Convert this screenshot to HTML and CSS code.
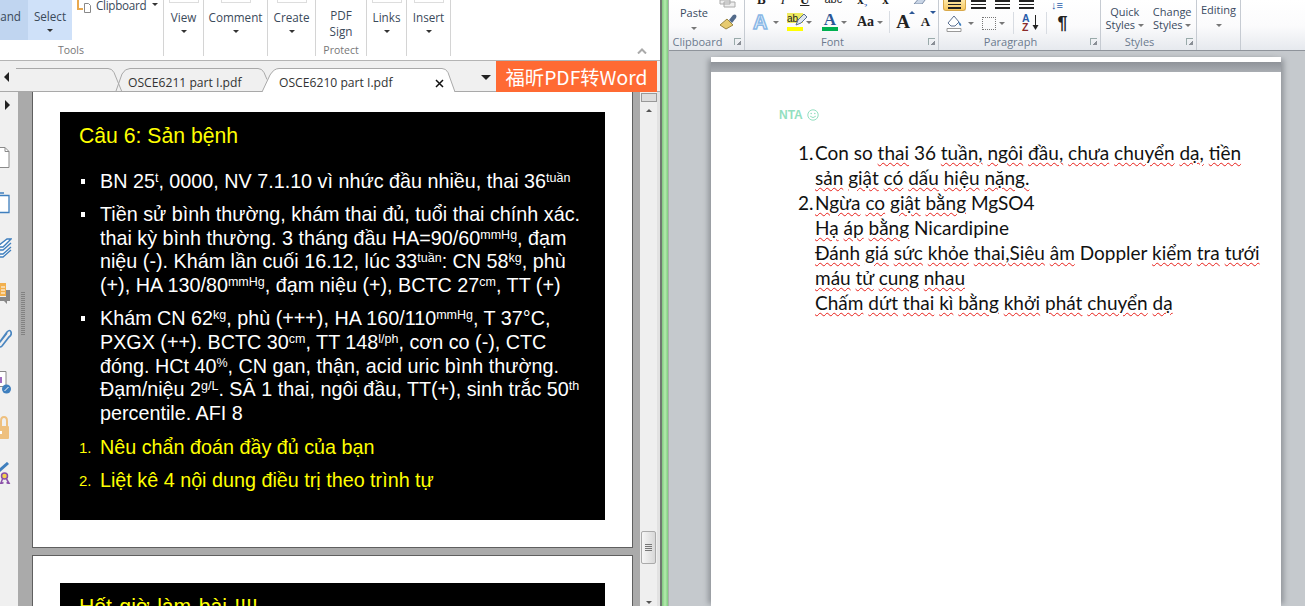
FILE: index.html
```html
<!DOCTYPE html>
<html lang="vi">
<head>
  <meta charset="UTF-8" />
  <title>OSCE6210 part I.pdf</title>
  <link rel="stylesheet" href="styles.css">
</head>
<body>
  <div class="screen">
    <!-- pdf reader window -->
    <section class="reader">
      <div class="pdf-ribbon">
        <div class="pdf-group tools">
          <div class="tools-top">
            <div class="tool tool-hand">and</div>
            <div class="tool tool-select">
              <span>Select</span>
              <i class="caret"></i>
            </div>
            <div class="clipboard">
              <svg width="15" height="13" viewBox="0 0 15 13"><path d="M1 0v9h5" fill="none" stroke="#e9a94f" stroke-width="2"/><path d="M7.500 3.500h4l2 2v7h-6z" fill="#fff" stroke="#888"/></svg>
              <span>Clipboard</span>
              <i class="caret"></i>
            </div>
          </div>
          <div class="pdf-label tools-label">Tools</div>
        </div>
        <div class="pdf-group menu menu-view"><b class="stub"></b><span>View</span><i class="caret"></i></div>
        <div class="pdf-group menu menu-comment"><b class="stub"></b><span>Comment</span><i class="caret"></i></div>
        <div class="pdf-group menu menu-create"><b class="stub"></b><span>Create</span><i class="caret"></i></div>
        <div class="pdf-group menu menu-protect">
          <span class="sign">PDF<br>Sign</span>
          <div class="pdf-label">Protect</div>
        </div>
        <div class="pdf-group menu menu-links"><b class="stub"></b><span>Links</span><i class="caret"></i></div>
        <div class="pdf-group menu menu-insert"><b class="stub"></b><span>Insert</span><i class="caret"></i></div>
        <div class="collapse">
          <svg width="10" height="6" viewBox="0 0 10 6"><path d="M1 5.500l4-4 4 4" fill="none" stroke="#aaa" stroke-width="2"/></svg>
        </div>
      </div>

      <div class="tab-strip">
        <svg class="tab-lines" width="496" height="31" viewBox="0 0 496 31">
          <path d="M262 31l8-17q4-6.500 9-6.500h163q4 0 6 4l7 19.500z" fill="#fff"/>
          <path d="M16 7.500h92q4 0 6 4l8 19.500M116 30l6-17q3-5.500 8-5.500h128q4 0 6 4l3 7M262 31l8-17q4-6.500 9-6.500h163q4 0 6 4l7 19.500" fill="none" stroke="#a9a9a9"/>
        </svg>
        <i class="arrow-left"></i>
        <div class="tab tab-one">OSCE6211 part I.pdf</div>
        <div class="tab tab-two">OSCE6210 part I.pdf</div>
        <svg class="tab-close" width="9" height="9" viewBox="0 0 9 9"><path d="M1 1l7 7M8 1l-7 7" stroke="#111" stroke-width="1.500"/></svg>
        <i class="tab-more"></i>
        <div class="convert">福昕PDF转Word</div>
      </div>

      <div class="reader-body">
        <div class="rail">
          <i class="arrow-right"></i>
          <div class="rail-icons">
            <div class="rail-icon"><svg width="12" height="22" viewBox="0 0 12 22"><path d="M-3 .5h8l4 4v16h-12z" fill="#fff" stroke="#8a8a8a"/><path d="M5 .5v4h4" fill="none" stroke="#8a8a8a"/></svg></div>
            <div class="rail-icon"><svg width="12" height="22" viewBox="0 0 12 22"><path d="M-3 1h7M-3 3.500h12v17h-12" fill="#fff" stroke="#3f7fbe" stroke-width="1.300"/></svg></div>
            <div class="rail-icon"><svg width="12" height="20" viewBox="0 0 12 20"><path d="M-2 8l9-7h4l-8 8h-5zM-2 12h5l8-7M-2 16h5l8-7M-2 19h5l8-7" fill="#fff" stroke="#3f7fbe" stroke-width="1.300"/></svg></div>
            <div class="rail-icon"><svg width="12" height="22" viewBox="0 0 12 22"><path d="M0 1h6v13h-6z" fill="#f2b04e"/><path d="M1 5h4M1 8h4M1 11h4" stroke="#fff"/><path d="M6 8h4v11h-3v3l-3-3h-4v-4h6z" fill="#888"/></svg></div>
            <div class="rail-icon"><svg width="12" height="22" viewBox="0 0 12 22"><path d="M-1 16l8-11q3-3 4 0t-2 5l-7 9q-2 2-3 0t1-4l7-9" fill="none" stroke="#4a86c0" stroke-width="1.700"/></svg></div>
            <div class="rail-icon"><svg width="12" height="24" viewBox="0 0 12 24"><path d="M-2 .5h8v15h-8z" fill="#fff" stroke="#888"/><path d="M1 6v6" stroke="#a06bc0" stroke-width="2"/><circle cx="6.500" cy="18" r="4.500" fill="#3f7fbe"/><path d="M4.500 20l4-4" stroke="#fff"/></svg></div>
            <div class="rail-icon"><svg width="12" height="24" viewBox="0 0 12 24"><path d="M1 10v-5q0-4 3-4t3 4v5" fill="none" stroke="#eec07f" stroke-width="2"/><rect x="-2" y="10" width="11" height="13" rx="1" fill="#eec07f"/><rect x="0" y="15" width="2" height="3" fill="#fff"/></svg></div>
            <div class="rail-icon"><svg width="12" height="22" viewBox="0 0 12 22"><path d="M-1 9l9-8" stroke="#3f7fbe" stroke-width="3"/><circle cx="4.500" cy="14" r="3" fill="#f2d34e" stroke="#8a4fa8" stroke-width="1.500"/><path d="M2.500 17l-2 5 3-1.500M6.500 17l3 5-3-1.500" fill="none" stroke="#8a4fa8" stroke-width="1.500"/></svg></div>
          </div>
        </div>
        <div class="pane-split"><i class="grip"></i></div>

        <div class="pages">
          <div class="page page-first">
            <div class="slide">
              <h2 class="slide-title">Câu 6: Sản bệnh</h2>
              <ul class="bullets">
                <li>BN 25<sup>t</sup>, 0000, NV 7.1.10 vì nhức đầu nhiều, thai 36<sup>tuần</sup></li>
                <li>Tiền sử bình thường, khám thai đủ, tuổi thai chính xác.<br>thai kỳ bình thường. 3 tháng đầu HA=90/60<sup>mmHg</sup>, đạm<br>niệu (-). Khám lần cuối 16.12, lúc 33<sup>tuần</sup>: CN 58<sup>kg</sup>, phù<br>(+), HA 130/80<sup>mmHg</sup>, đạm niệu (+), BCTC 27<sup>cm</sup>, TT (+)</li>
                <li>Khám CN 62<sup>kg</sup>, phù (+++), HA 160/110<sup>mmHg</sup>, T 37°C,<br>PXGX (++). BCTC 30<sup>cm</sup>, TT 148<sup>l/ph</sup>, cơn co (-), CTC<br>đóng. HCt 40<sup>%</sup>, CN gan, thận, acid uric bình thường.<br>Đạm/niệu 2<sup>g/L</sup>. SÂ 1 thai, ngôi đầu, TT(+), sinh trắc 50<sup>th</sup><br>percentile. AFI 8</li>
              </ul>
              <ol class="questions">
                <li>Nêu chẩn đoán đầy đủ của bạn</li>
                <li>Liệt kê 4 nội dung điều trị theo trình tự</li>
              </ol>
            </div>
          </div>
          <div class="page page-second">
            <div class="slide slide-next">
              <h2 class="slide-title">Hết giờ làm bài !!!!</h2>
            </div>
          </div>
        </div>

        <div class="scrollbar">
          <div class="split-box"></div>
          <i class="scroll-up"></i>
          <div class="thumb"><i></i><i></i><i></i><i></i></div>
          <i class="scroll-down"></i>
        </div>
      </div>
    </section>

    <div class="window-edge"></div>

    <!-- word window -->
    <section class="word">
      <div class="word-ribbon">
        <div class="w-group g-clipboard">
          <div class="w-tools">
            <div class="paste">Paste<i class="caret caret-soft"></i></div>
            <div class="clip-side">
              <svg width="18" height="8" viewBox="0 0 18 8"><path d="M1 0h10v4h-10zM5 2h11v5h-11z" fill="#eee" stroke="#aaa"/></svg>
              <svg width="18" height="16" viewBox="0 0 18 16"><path d="M10 6l4-5q2-1 3 0t0 3l-4 5z" fill="#526a8a"/><path d="M1 11l7-6 6 6-7 4z" fill="#e7cb70" stroke="#9a8540"/></svg>
            </div>
          </div>
          <div class="w-label">Clipboard<i class="launcher"></i></div>
        </div>

        <div class="w-group g-font">
          <div class="w-tools font-tools">
            <div class="top-row">
              <b class="bold">B</b><em class="ital">I</em><u class="under">U</u>
              <s class="strike">abc</s><span class="subs">x<sub>2</sub></span><span class="sups">x</span>
              <svg class="eraser" width="18" height="9" viewBox="0 0 18 9"><path d="M2 9l8-9h7l-7 9z" fill="#c9d5e6" stroke="#7d8ea8"/></svg>
            </div>
            <div class="bottom-row">
              <span class="fx-a">A</span><i class="caret caret-soft"></i>
              <span class="hl-a">ab<svg width="13" height="13" viewBox="0 0 13 13"><path d="M1 12l2-5 6-6 3 3-6 6z" fill="#dfe6ef" stroke="#5b7091"/></svg></span><i class="caret caret-soft"></i>
              <span class="col-a">A</span><i class="caret caret-soft"></i>
              <span class="case-a">Aa</span><i class="caret caret-soft"></i>
              <i class="sep sep-font"></i>
              <span class="grow-a">A</span><span class="shrink-a">A</span>
            </div>
          </div>
          <div class="w-label">Font<i class="launcher"></i></div>
        </div>

        <div class="w-group g-para">
          <div class="w-tools para-tools">
            <div class="top-row">
              <span class="al al-on"><i></i><i></i><i></i></span>
              <span class="al"><i></i><i></i><i></i></span>
              <span class="al"><i></i><i></i><i></i></span>
              <span class="al"><i></i><i></i><i></i></span>
              <span class="spacing">↓≡</span>
            </div>
            <div class="bottom-row">
              <svg class="shade" width="20" height="18" viewBox="0 0 20 18"><path d="M3 9l6-7 5 6-4 4H6z" fill="#fff" stroke="#5b7091"/><path d="M14 8q3 2 2 4-3-1-2-4z" fill="#3f7fbe"/><path d="M2 14.500h14v3h-14z" fill="#fff" stroke="#999"/></svg>
              <i class="caret caret-soft"></i>
              <span class="borders"></span>
              <i class="caret caret-soft"></i>
              <i class="sep sep-border"></i>
              <span class="az"><span>A</span><span>Z</span></span>
              <svg class="az-arrow" width="7" height="16" viewBox="0 0 7 16"><path d="M3.500 0v11" stroke="#222"/><path d="M.5 10h6l-3 5z" fill="#222"/></svg>
              <i class="sep sep-sort"></i>
              <span class="pilcrow">¶</span>
            </div>
          </div>
          <div class="w-label">Paragraph<i class="launcher"></i></div>
        </div>

        <div class="w-group g-styles">
          <div class="w-tools style-tools">
            <div class="style-btn">Quick<br>Styles <i class="caret caret-soft"></i></div>
            <div class="style-btn">Change<br>Styles <i class="caret caret-soft"></i></div>
          </div>
          <div class="w-label">Styles<i class="launcher"></i></div>
        </div>

        <div class="w-group g-editing">
          <span>Editing</span>
          <i class="caret caret-soft"></i>
        </div>
        <div class="w-rest"></div>
      </div>

      <div class="doc-area">
        <div class="doc-sheet">
          <div class="doc-prev"></div>
          <div class="doc-gap"></div>
          <div class="doc-page">
            <div class="header-note">NTA <svg class="smile" width="12" height="12" viewBox="0 0 12 12"><circle cx="6" cy="6" r="5.200" fill="none" stroke="#93dfc0"/><circle cx="4.200" cy="4.500" r=".8" fill="#93dfc0"/><circle cx="7.800" cy="4.500" r=".8" fill="#93dfc0"/><path d="M3.200 7.200q2.800 2.800 5.600 0" fill="none" stroke="#93dfc0"/></svg></div>
            <ol class="answers">
              <li>Con so <span class="sp">thai</span> 36 <span class="sp">tuần,</span> <span class="sp">ngôi</span> <span class="sp">đầu,</span> <span class="sp">chưa</span> <span class="sp">chuyển</span> <span class="sp">dạ,</span> <span class="sp">tiền</span><br><span class="sp">sản</span> <span class="sp">giật</span> <span class="sp">có</span> <span class="sp">dấu</span> <span class="sp">hiệu</span> <span class="sp">nặng.</span></li>
              <li><span class="sp">Ngừa</span> <span class="sp">co</span> <span class="sp">giật</span> <span class="sp">bằng</span> MgSO4<br><span class="sp">Hạ</span> <span class="sp">áp</span> <span class="sp">bằng</span> Nicardipine<br><span class="sp">Đánh</span> <span class="sp">giá</span> <span class="sp">sức</span> <span class="sp">khỏe</span> <span class="sp">thai,Siêu</span> <span class="sp">âm</span> Doppler <span class="sp">kiểm</span> <span class="sp">tra</span> <span class="sp">tưới</span><br><span class="sp">máu</span> <span class="sp">tử</span> <span class="sp">cung</span> <span class="sp">nhau</span><br><span class="sp">Chấm</span> <span class="sp">dứt</span> <span class="sp">thai</span> <span class="sp">kì</span> <span class="sp">bằng</span> <span class="sp">khởi</span> <span class="sp">phát</span> <span class="sp">chuyển</span> <span class="sp">dạ</span></li>
            </ol>
          </div>
        </div>
      </div>
    </section>
  </div>
</body>
</html>
```
FILE: styles.css
```css
* {
  box-sizing: border-box;
}

html, body {
  margin: 0;
  padding: 0;
  overflow: hidden;
}

body {
  font-family: "Open Sans", "Liberation Sans", sans-serif;
  background: #fff;
}

.screen {
  display: flex;
  width: 1305px;
  height: 606px;
  overflow: hidden;
}

.caret {
  display: inline-block;
  width: 0;
  height: 0;
  border-left: 3px solid transparent;
  border-right: 3px solid transparent;
  border-top: 3px solid #333;
}

.caret-soft {
  border-top-color: #777;
}

/* pdf reader */
.reader {
  width: 660px;
  height: 606px;
  display: flex;
  flex-direction: column;
  background: #fff;
}

.pdf-ribbon {
  height: 61px;
  display: flex;
  border-bottom: 1px solid #b4b4b4;
  font-size: 11.700px;
  color: #3b4a5a;
  overflow: hidden;
}

.pdf-group {
  height: 56px;
  border-right: 1px solid #d4d4d4;
  position: relative;
}

.pdf-label {
  text-align: center;
  font-size: 10.500px;
  color: #777;
  line-height: 14px;
  position: absolute;
  left: 0;
  right: 0;
  bottom: -1px;
}

.tools-label {
  right: 21px;
}

.tools {
  width: 164px;
}

.tools-top {
  display: flex;
  height: 40px;
}

.tool {
  display: flex;
  flex-direction: column;
  align-items: center;
  padding-top: 7px;
  line-height: 18px;
}

.tool-hand {
  width: 28px;
  background: #c0d5f0;
  align-items: flex-end;
  padding-right: 7px;
}

.tool-select {
  width: 44px;
  background: #cfe1f9;
  gap: 4px;
}

.clipboard {
  display: flex;
  align-items: flex-start;
  gap: 4px;
  margin-left: 5px;
  line-height: 10px;
}

.clipboard span {
  letter-spacing: -0.300px;
}

.clipboard .caret {
  margin-top: 3px;
  margin-left: 2px;
}

.menu {
  display: flex;
  flex-direction: column;
  align-items: center;
  padding-top: 8px;
  line-height: 18px;
}

.menu .caret {
  margin-top: 4px;
}

.stub {
  position: absolute;
  top: -11px;
  width: 30px;
  height: 14px;
  border: 1px solid #ddd;
}

.menu-view { width: 40px; }
.menu-comment { width: 64px; }
.menu-create { width: 48px; }
.menu-protect { width: 51px; padding-top: 8px; }
.menu-links { width: 40px; }
.menu-insert { width: 44px; }

.sign {
  line-height: 15.500px;
  text-align: center;
}

.collapse {
  flex: 1;
  display: flex;
  justify-content: flex-end;
  align-items: flex-end;
  padding: 0 13px 6px 0;
}

/* tabs */
.tab-strip {
  height: 31px;
  background: #f0f0f0;
  border-bottom: 1px solid #a9a9a9;
  display: flex;
  position: relative;
  font-size: 12.150px;
  color: #333;
}

.tab-lines {
  position: absolute;
  left: 0;
  top: 0;
}

.arrow-left {
  position: absolute;
  left: 4px;
  top: 11px;
  border-top: 5px solid transparent;
  border-bottom: 5px solid transparent;
  border-right: 5px solid #222;
}

.tab {
  position: relative;
  line-height: 14px;
  padding-top: 15px;
  white-space: nowrap;
}

.tab-one {
  margin-left: 128px;
  width: 151px;
}

.tab-two {
  width: 156px;
}

.tab-close {
  position: relative;
  margin-top: 18px;
}

.tab-more {
  position: relative;
  margin: 14px 0 0 37px;
  width: 0;
  height: 0;
  border-left: 5px solid transparent;
  border-right: 5px solid transparent;
  border-top: 5px solid #222;
}

.convert {
  position: absolute;
  left: 496px;
  top: 0;
  width: 161px;
  height: 31px;
  background: #ff6a33;
  color: #fff;
  font-family: "Noto Sans CJK SC", "Noto Sans", sans-serif;
  font-size: 19.300px;
  line-height: 32px;
  text-align: center;
  white-space: nowrap;
}

/* reader body */
.reader-body {
  flex: 1;
  display: flex;
  min-height: 0;
}

.rail {
  width: 18px;
  background: #f0f0f0;
  overflow: hidden;
  position: relative;
}

.arrow-right {
  position: absolute;
  left: 5px;
  top: 8px;
  border-top: 5px solid transparent;
  border-bottom: 5px solid transparent;
  border-left: 5px solid #222;
}

.rail-icons {
  margin-top: 43px;
  display: flex;
  flex-direction: column;
}

.rail-icon {
  height: 45px;
  display: flex;
  align-items: center;
}

.pane-split {
  width: 14px;
  background: #aaa;
  position: relative;
}

.grip {
  position: absolute;
  left: 3px;
  top: 200px;
  width: 4px;
  height: 44px;
  background: repeating-linear-gradient(#777 0 1px, transparent 1px 2px);
  opacity: 0.8;
}

.pages {
  width: 608px;
  background: #aaa;
  overflow: hidden;
}

.page {
  background: #fff;
  margin-right: 7px;
  border: 1px solid #5f5f5f;
}

.page-first {
  height: 456px;
  border-top: 0;
  padding: 20px 27px 0;
}

.page-second {
  height: 60px;
  margin-top: 7px;
  border-bottom: 0;
  padding: 27px 27px 0;
}

.slide {
  background: #000;
  height: 408px;
  padding: 10px 19px;
  color: #fff;
  font-family: "Liberation Sans", Arial, sans-serif;
  font-size: 19.750px;
  line-height: 24px;
}

.slide-next {
  height: 40px;
}

.slide-title {
  margin: 0;
  font-size: 21.200px;
  font-weight: normal;
  line-height: 28px;
  color: #ff0;
}

.slide-next .slide-title {
  word-spacing: 1.500px;
}

.bullets {
  list-style: none;
  margin: 20px 0 0;
  padding: 0 0 0 21px;
  line-height: 23.800px;
}

.bullets li {
  margin-bottom: 9px;
  position: relative;
  white-space: nowrap;
}

.bullets li::before {
  content: "";
  position: absolute;
  left: -19px;
  top: 9px;
  width: 4px;
  height: 5px;
  background: #fff;
}

sup {
  font-size: 12.500px;
  line-height: 0;
  vertical-align: 6px;
}

.questions {
  list-style: none;
  counter-reset: q;
  margin: 0;
  padding: 0 0 0 21px;
  color: #ff0;
}

.questions li {
  counter-increment: q;
  margin-bottom: 9px;
  position: relative;
}

.questions li::before {
  content: counter(q) ".";
  position: absolute;
  left: -21px;
  top: 1px;
  font-size: 15px;
}

.scrollbar {
  width: 20px;
  background: #efefef;
  border-right: 3px solid #e2e2e2;
  display: flex;
  flex-direction: column;
  align-items: center;
}

.split-box {
  width: 16px;
  height: 9px;
  margin-top: 1px;
  border: 1px solid #999;
  background: #ddd;
}

.scroll-up {
  margin-top: 7px;
  border-left: 3px solid transparent;
  border-right: 3px solid transparent;
  border-bottom: 3px solid #555;
}

.thumb {
  margin-top: 419px;
  width: 15px;
  height: 33px;
  border: 1px solid #aaa;
  border-radius: 2px;
  background: linear-gradient(90deg, #f6f6f6, #d8d8d8);
  display: flex;
  flex-direction: column;
  justify-content: center;
  align-items: center;
  gap: 1px;
}

.thumb i {
  width: 7px;
  height: 1px;
  background: #777;
}

.scroll-down {
  margin-top: 37px;
  border-left: 3px solid transparent;
  border-right: 3px solid transparent;
  border-top: 3px solid #555;
}

.window-edge {
  width: 9px;
  background: linear-gradient(90deg, #707870 0 2px, #7fc97f 2px, #b5ecae 5px, #7fcb7f 8px, #a8b0a8 8px);
}

/* word */
.word {
  flex: 1;
  min-width: 0;
  display: flex;
  flex-direction: column;
  background: #c5c9cd;
}

.word-ribbon {
  height: 51px;
  display: flex;
  background: linear-gradient(#fff 0, #fbfbfc 26px, #e6e9ee 50px);
  border-bottom: 1px solid #8f949b;
  font-size: 11px;
  color: #3a4a5f;
  position: relative;
  z-index: 1;
}

.w-group {
  height: 50px;
  border-right: 1px solid #c6cbd2;
  position: relative;
}

.w-tools {
  height: 35px;
}

.w-label {
  text-align: center;
  font-size: 11px;
  color: #6b7a8e;
  line-height: 14px;
  position: relative;
  padding-right: 18px;
}

.launcher {
  position: absolute;
  right: 3px;
  top: 3px;
  width: 7px;
  height: 7px;
  border-left: 1px solid #9aa;
  border-top: 1px solid #9aa;
  background: linear-gradient(135deg, transparent 60%, #8a8f96 60%);
}

.sep {
  width: 1px;
  height: 22px;
  background: #d8dce2;
}

.sep-font { margin-left: 6px; }
.sep-border { margin-left: 8px; }
.sep-sort { margin-left: 7px; }

.g-clipboard { width: 76px; }
.g-font { width: 194px; }
.g-para { width: 162px; }
.g-styles { width: 96px; }
.g-editing {
  width: 44px;
  display: flex;
  flex-direction: column;
  align-items: center;
  padding-top: 3px;
  gap: 7px;
  line-height: 14px;
}
.w-rest {
  flex: 1;
}

.g-clipboard .w-tools {
  display: flex;
}

.paste {
  width: 50px;
  padding: 6px 0 0 0;
  text-align: center;
  line-height: 14px;
  display: flex;
  flex-direction: column;
  align-items: center;
  gap: 7px;
}

.clip-side {
  display: flex;
  flex-direction: column;
  align-items: center;
  gap: 6px;
}

.top-row {
  height: 12px;
  display: flex;
  align-items: flex-start;
  overflow: hidden;
  color: #222;
}

.bottom-row {
  height: 22px;
  display: flex;
  align-items: center;
}

.bottom-row .caret {
  margin: 0 0 0 3px;
}

.font-tools .top-row {
  padding-left: 12px;
  font: bold 13px/9px "Liberation Serif", serif;
  gap: 15px;
  height: 7px;
  margin-bottom: 4px;
}

.font-tools .top-row > * {
  margin-top: -5px;
}

.ital { font-weight: normal; }
.under { font-weight: bold; }
.strike { font-size: 11px; font-family: "Liberation Sans", sans-serif; font-weight: normal; }
.subs sub { font-size: 7px; color: #2a5caa; line-height: 0; }
.eraser { margin-left: 8px; }

.font-tools .bottom-row {
  padding-left: 8px;
}

.fx-a {
  font: bold 20px/20px "Liberation Sans", sans-serif;
  color: #edf5fc;
  -webkit-text-stroke: 1.500px #8ab8e6;
  width: 17px;
}

.hl-a {
  margin-left: 8px;
  font: 10px/11px "Liberation Sans", sans-serif;
  color: #222;
  border-bottom: 4px solid #ff0;
  display: flex;
  height: 18px;
  width: 16px;
  background: linear-gradient(#eeea60 0 10px, transparent 10px);
  white-space: nowrap;
}

.hl-a svg { flex: none; margin-left: -3px; }

.col-a {
  margin-left: 10px;
  font: bold 17px/14px "Liberation Serif", serif;
  color: #2b5797;
  border-bottom: 4px solid #00b050;
  width: 16px;
  text-align: center;
}

.case-a {
  margin-left: 10px;
  font: bold 14px/16px "Liberation Serif", serif;
  color: #222;
}

.grow-a {
  margin-left: 6px;
  font: bold 19px/16px "Liberation Serif", serif;
  color: #222;
  position: relative;
}

.grow-a::after {
  content: "";
  position: absolute;
  right: -5px;
  top: -3px;
  border-left: 3px solid transparent;
  border-right: 3px solid transparent;
  border-bottom: 3px solid #2b5797;
}

.shrink-a {
  margin-left: 11px;
  font: bold 13px/16px "Liberation Serif", serif;
  color: #222;
  position: relative;
}

.shrink-a::after {
  content: "";
  position: absolute;
  right: -6px;
  top: -3px;
  border-left: 3px solid transparent;
  border-right: 3px solid transparent;
  border-top: 3px solid #2b5797;
}

.para-tools .top-row {
  gap: 9px;
  padding-left: 4px;
}

.al {
  width: 15px;
  height: 10px;
  display: flex;
  flex-direction: column;
  gap: 2px;
}

.al i {
  height: 1.500px;
  background: #222;
}

.al-on {
  width: 23px;
  height: 11px;
  margin-right: -4px;
  padding: 0 4px;
  background: linear-gradient(#fde8a8, #f8c860);
  border: 1px solid #d9a94a;
  border-top: 0;
  border-radius: 0 0 3px 3px;
}

.spacing {
  margin-left: 8px;
  color: #2a5caa;
  font-size: 11px;
  line-height: 10px;
}

.para-tools .bottom-row {
  padding-left: 6px;
  height: 22px;
}

.borders {
  margin-left: 8px;
  width: 14px;
  height: 13px;
  border: 1px dotted #777;
}

.az {
  margin-left: 8px;
  display: flex;
  flex-direction: column;
  font: bold 10.500px/9.500px "Liberation Sans", sans-serif;
}

.az span:first-child { color: #2a5caa; }
.az span:last-child { color: #8a2a2a; }

.az-arrow {
  margin-left: 2px;
}

.pilcrow {
  margin-left: 11px;
  font: bold 18px/20px "Liberation Sans", sans-serif;
  color: #222;
}

.style-tools {
  display: flex;
  justify-content: space-around;
  padding-top: 5px;
}

.style-btn {
  text-align: center;
  line-height: 13px;
}

.style-btn .caret {
  vertical-align: 2px;
}

.doc-area {
  flex: 1;
  min-height: 0;
  padding-left: 42px;
  padding-right: 24px;
  display: flex;
  flex-direction: column;
}

.doc-sheet {
  flex: 1;
  margin-top: 6px;
  display: flex;
  flex-direction: column;
  box-shadow: -5px 0 5px -2px #94989d, 5px 0 5px -2px #94989d;
}

.doc-prev {
  height: 5px;
  background: #fff;
}

.doc-gap {
  height: 10px;
  background: linear-gradient(#8f9399, #a9adb2);
}

.doc-page {
  flex: 1;
  background: #fff;
  padding: 35px 0 0 68px;
}

.header-note {
  font-family: "Liberation Sans", sans-serif;
  font-size: 12px;
  line-height: 16px;
  color: #93dfc0;
  font-weight: bold;
  display: flex;
  align-items: center;
  gap: 4px;
}

.answers {
  list-style: none;
  counter-reset: a;
  margin: 17px 0 0 36px;
  padding: 0;
  font-family: Lato, "Open Sans", sans-serif;
  font-size: 19px;
  line-height: 25px;
  color: #111;
  white-space: nowrap;
}

.answers li {
  counter-increment: a;
  position: relative;
}

.answers li::before {
  content: counter(a) ".";
  position: absolute;
  left: -17px;
}

.sp {
  text-decoration: underline wavy #e8201a 1px;
  text-underline-offset: 2px;
}
```
